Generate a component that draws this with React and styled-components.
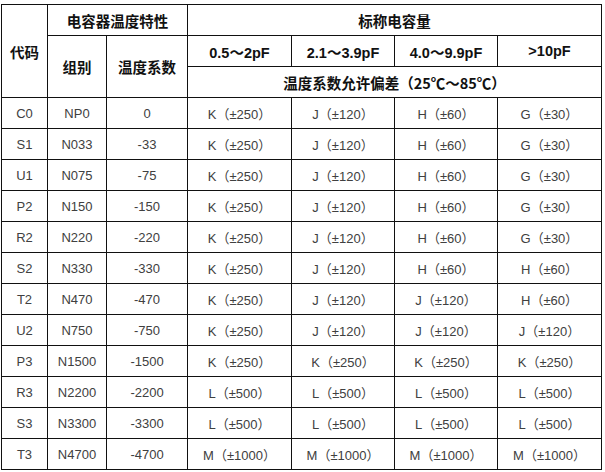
import styled, { createGlobalStyle } from "styled-components";

const GlobalStyle = createGlobalStyle`
  html, body {
    margin: 0;
    padding: 0;
    background: #fff;
  }
  body {
    padding: 4px 0 0 1px;
    font-family: "Liberation Sans", Arial, "Noto Sans CJK SC", sans-serif;
  }
`;

const Table = styled.table`
  border-collapse: collapse;
  table-layout: fixed;
  width: 601px;
  border: 1px solid #111;
`;

const HeadCell = styled.th`
  border: 1px solid #111;
  height: 30px;
  padding: 0;
  text-align: center;
  vertical-align: middle;
  color: #111;
  font-weight: bold;
  font-size: ${({ $cjk }) => ($cjk ? "14.5px" : "14.5px")};
  font-family: ${({ $cjk }) =>
    $cjk
      ? `"Noto Sans CJK SC", "Liberation Sans", sans-serif`
      : `"Liberation Sans", "Noto Sans CJK SC", sans-serif`};
  white-space: nowrap;
`;

const Cell = styled.td`
  border: 1px solid #111;
  height: 30px;
  padding: 0;
  text-align: center;
  vertical-align: middle;
  color: #404040;
  font-size: 13px;
  white-space: nowrap;
`;

const Paren = styled.span`
  font-family: "Noto Sans CJK SC", sans-serif;
  font-size: 13px;
`;

const widths = [46, 59, 81, 104, 103, 103, 104];

const rows = [
  ["C0", "NP0", "0", ["K", "250"], ["J", "120"], ["H", "60"], ["G", "30"]],
  ["S1", "N033", "-33", ["K", "250"], ["J", "120"], ["H", "60"], ["G", "30"]],
  ["U1", "N075", "-75", ["K", "250"], ["J", "120"], ["H", "60"], ["G", "30"]],
  ["P2", "N150", "-150", ["K", "250"], ["J", "120"], ["H", "60"], ["G", "30"]],
  ["R2", "N220", "-220", ["K", "250"], ["J", "120"], ["H", "60"], ["G", "30"]],
  ["S2", "N330", "-330", ["K", "250"], ["J", "120"], ["H", "60"], ["H", "60"]],
  ["T2", "N470", "-470", ["K", "250"], ["J", "120"], ["J", "120"], ["H", "60"]],
  ["U2", "N750", "-750", ["K", "250"], ["J", "120"], ["J", "120"], ["J", "120"]],
  ["P3", "N1500", "-1500", ["K", "250"], ["K", "250"], ["K", "250"], ["K", "250"]],
  ["R3", "N2200", "-2200", ["L", "500"], ["L", "500"], ["L", "500"], ["L", "500"]],
  ["S3", "N3300", "-3300", ["L", "500"], ["L", "500"], ["L", "500"], ["L", "500"]],
  ["T3", "N4700", "-4700", ["M", "1000"], ["M", "1000"], ["M", "1000"], ["M", "1000"]],
];

const Tolerance = ({ code, value }) => (
  <>
    {code}
    <Paren>（</Paren>±{value}
    <Paren>）</Paren>
  </>
);

const App = () => (
  <>
    <GlobalStyle />
    <Table>
      <colgroup>
        {widths.map((w, i) => (
          <col key={i} style={{ width: w }} />
        ))}
      </colgroup>
      <thead>
        <tr>
          <HeadCell $cjk rowSpan={3}>代码</HeadCell>
          <HeadCell $cjk colSpan={2}>电容器温度特性</HeadCell>
          <HeadCell $cjk colSpan={4}>标称电容量</HeadCell>
        </tr>
        <tr>
          <HeadCell $cjk rowSpan={2}>组别</HeadCell>
          <HeadCell $cjk rowSpan={2}>温度系数</HeadCell>
          <HeadCell>0.5～2pF</HeadCell>
          <HeadCell>2.1～3.9pF</HeadCell>
          <HeadCell>4.0～9.9pF</HeadCell>
          <HeadCell>&gt;10pF</HeadCell>
        </tr>
        <tr>
          <HeadCell $cjk colSpan={4}>温度系数允许偏差（25℃～85℃）</HeadCell>
        </tr>
      </thead>
      <tbody>
        {rows.map(([code, group, coef, ...tol]) => (
          <tr key={code}>
            <Cell>{code}</Cell>
            <Cell>{group}</Cell>
            <Cell>{coef}</Cell>
            {tol.map(([c, v], i) => (
              <Cell key={i}>
                <Tolerance code={c} value={v} />
              </Cell>
            ))}
          </tr>
        ))}
      </tbody>
    </Table>
  </>
);

export default App;
